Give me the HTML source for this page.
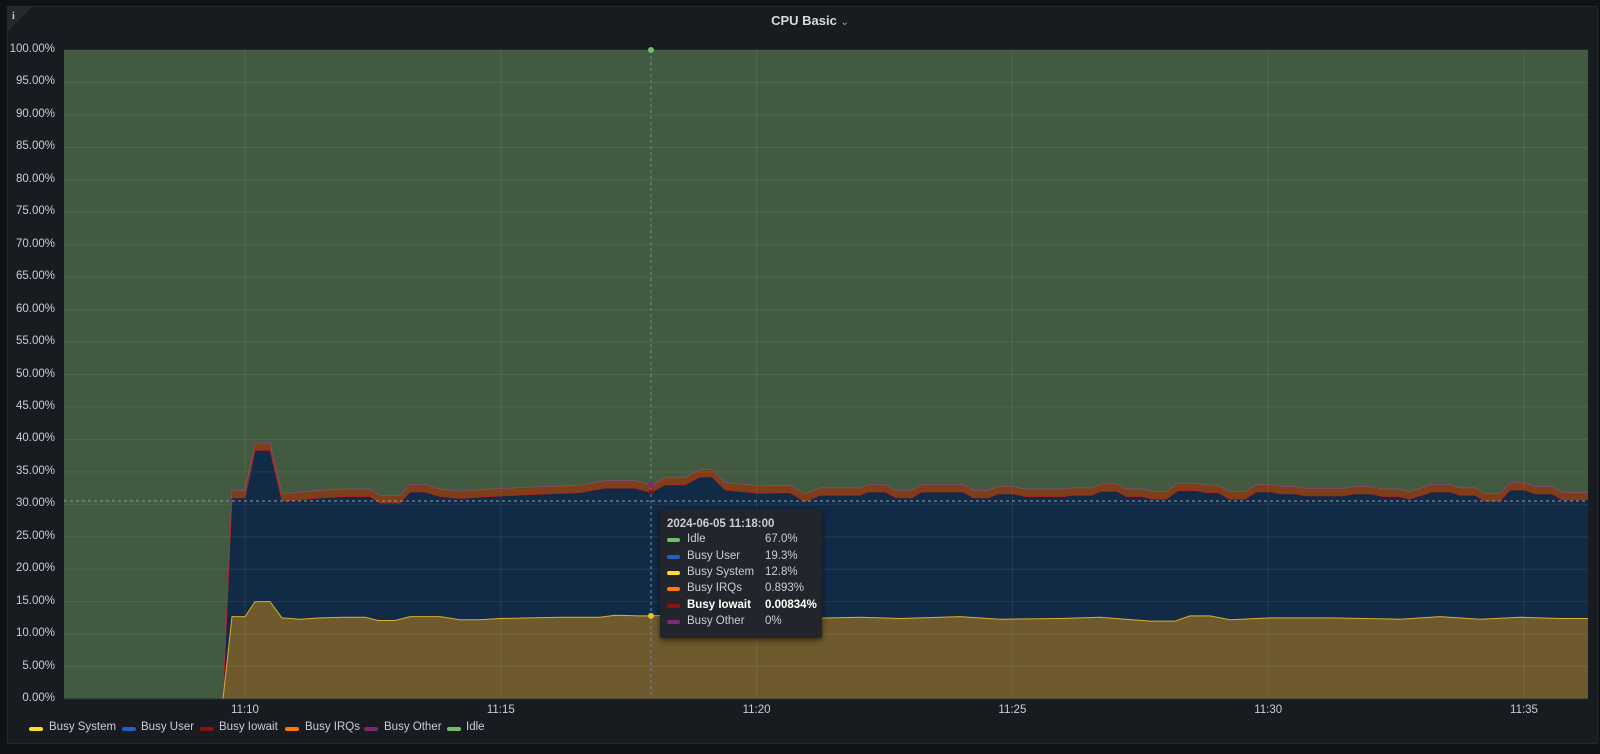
<!DOCTYPE html>
<html><head><meta charset="utf-8">
<style>
html,body{margin:0;padding:0;background:#111217;width:1600px;height:754px;overflow:hidden;font-family:"Liberation Sans",sans-serif;}
.panel{position:absolute;left:7px;top:6px;width:1591px;height:738px;background:#181b1f;border:1px solid #25282d;border-radius:2px;box-sizing:border-box;}
.title{position:absolute;left:0;width:1620px;top:13px;text-align:center;color:#d8d9e0;font-size:13px;font-weight:bold;}
.ylab{position:absolute;right:1545px;font-size:11.5px;color:#ccccdc;text-align:right;white-space:nowrap;}
.xlab{position:absolute;top:704px;font-size:11.5px;color:#ccccdc;transform:translateX(-50%);}
.leg{position:absolute;top:721px;font-size:11.5px;color:#ccccdc;}
.sw{position:absolute;top:727px;width:14px;height:4px;border-radius:2px;}
.tt{position:absolute;left:660px;top:509px;width:162px;height:129px;background:#22252b;border-radius:2px;box-shadow:0 2px 6px rgba(0,0,0,.6);font-size:11.5px;color:#ccccdc;}
.tt div{position:absolute;white-space:nowrap;}
</style></head><body>
<div class="panel"></div>
<svg style="position:absolute;left:7px;top:6px" width="26" height="26"><polygon points="0,0 26,0 0,26" fill="#25282d"/><text x="5" y="13" font-size="10" font-weight="bold" fill="#ccccdc" font-family="Liberation Serif">i</text></svg>
<div class="title">CPU Basic <span style="font-weight:normal;font-size:10px;color:#aaa">&#8964;</span></div>
<svg id="ch" style="position:absolute;left:0;top:0" width="1600" height="754"></svg>
<div id="labs"></div>
<div class="tt">
<div style="left:7px;top:9px;font-weight:bold;">2024-06-05 11:18:00</div>
<div style="left:7px;top:29px;width:13px;height:4px;background:#73bf69;border-radius:2px"></div><div style="left:27px;top:24px">Idle</div><div style="left:105px;top:24px">67.0%</div>
<div style="left:7px;top:46px;width:13px;height:4px;background:#1f60c4;border-radius:2px"></div><div style="left:27px;top:41px">Busy User</div><div style="left:105px;top:41px">19.3%</div>
<div style="left:7px;top:62px;width:13px;height:4px;background:#fade2a;border-radius:2px"></div><div style="left:27px;top:57px">Busy System</div><div style="left:105px;top:57px">12.8%</div>
<div style="left:7px;top:78px;width:13px;height:4px;background:#ff780a;border-radius:2px"></div><div style="left:27px;top:73px">Busy IRQs</div><div style="left:105px;top:73px">0.893%</div>
<div style="left:7px;top:95px;width:13px;height:4px;background:#8f1010;border-radius:2px"></div><div style="left:27px;top:90px;font-weight:bold;color:#fff">Busy Iowait</div><div style="left:105px;top:90px;font-weight:bold;color:#fff">0.00834%</div>
<div style="left:7px;top:111px;width:13px;height:4px;background:#7b2b6e;border-radius:2px"></div><div style="left:27px;top:106px">Busy Other</div><div style="left:105px;top:106px">0%</div>
</div>
<div class="sw" style="left:29px;background:#fade2a"></div><div class="leg" style="left:49px">Busy System</div>
<div class="sw" style="left:122px;background:#1f60c4"></div><div class="leg" style="left:141px">Busy User</div>
<div class="sw" style="left:200px;background:#8f1010"></div><div class="leg" style="left:219px">Busy Iowait</div>
<div class="sw" style="left:285px;background:#ff780a"></div><div class="leg" style="left:305px">Busy IRQs</div>
<div class="sw" style="left:364px;background:#7b2b6e"></div><div class="leg" style="left:384px">Busy Other</div>
<div class="sw" style="left:447px;background:#73bf69"></div><div class="leg" style="left:466px">Idle</div>
<script>
var L=64,R=1588,T=50,B=699,K=(B-T)/100;
function Y(v){return B-v*K;}
var svg=document.getElementById('ch'),h='';
var sys=[[64,0],[223,0],[232,12.7],[245,12.7],[255,15],[270,15],[282,12.5],[300,12.3],[320,12.5],[345,12.6],[365,12.6],[378,12.1],[395,12.1],[410,12.7],[440,12.7],[460,12.2],[480,12.2],[500,12.4],[530,12.5],[560,12.6],[600,12.6],[615,12.9],[640,12.8],[651,12.8],[670,12.9],[700,12.6],[760,12.5],[800,12.4],[860,12.6],[900,12.4],[960,12.7],[1000,12.3],[1060,12.4],[1100,12.6],[1150,12.0],[1175,12.0],[1190,12.8],[1210,12.8],[1230,12.2],[1270,12.5],[1330,12.5],[1400,12.3],[1440,12.7],[1480,12.3],[1520,12.6],[1560,12.4],[1588,12.4]];
var usr=[[64,0],[223,0],[232,31.0],[245,31.0],[255,38.3],[270,38.3],[282,30.5],[300,30.7],[320,31.0],[345,31.2],[370,31.2],[380,30.2],[400,30.2],[410,31.9],[425,31.9],[440,31.2],[460,30.9],[490,31.2],[530,31.5],[580,31.8],[605,32.5],[635,32.5],[651,31.8],[665,33.0],[685,33.0],[700,34.2],[712,34.2],[725,32.2],[760,31.7],[790,31.8],[805,30.4],[820,31.4]];
var z=[[0,31.4],[105,31.4],[125,31.9],[170,31.9],[200,31.0],[240,31.0],[265,31.9],[300,31.9],[330,31.9],[375,31.9],[400,31.0],[440,31.0],[465,31.6],[505,31.6],[535,31.2],[640,31.2],[660,31.4],[710,31.4],[735,32.0],[775,32.0],[800,31.2],[840,31.2],[870,30.8],[905,30.8],[935,32.1],[985,32.1],[1010,31.8],[1040,31.8],[1070,30.8],[1110,30.8],[1140,31.9],[1180,31.9],[1205,31.6],[1240,31.6],[1270,31.3],[1370,31.3],[1395,31.6],[1440,31.6],[1470,31.2],[1510,31.2],[1540,30.8]];
z.forEach(function(p){usr.push([820+p[0]/2.613,p[1]]);});
[[1432,31.9],[1450,31.9],[1460,31.4],[1475,31.4],[1485,30.5],[1500,30.5],[1510,32.2],[1525,32.2],[1535,31.6],[1552,31.6],[1562,30.7],[1588,30.7]].forEach(function(p){usr.push(p);});
var tot=usr.map(function(p){return [p[0],p[0]<=223?p[1]:p[1]+1.15];});
function line(a){return a.map(function(p,i){return (i?'L':'M')+p[0].toFixed(1)+','+Y(p[1]).toFixed(1);}).join('');}
function area(a){return line(a)+'L'+R+','+B+'L'+L+','+B+'Z';}
function band(top,bot){var s=line(top);for(var i=bot.length-1;i>=0;i--)s+='L'+bot[i][0].toFixed(1)+','+Y(bot[i][1]).toFixed(1);return s+'Z';}
h+='<rect x="'+L+'" y="'+T+'" width="'+(R-L)+'" height="'+(B-T)+'" fill="#425a40"/>';
h+='<path d="'+band(tot,usr)+'" fill="#7d3f17"/>';
h+='<path d="'+band(usr,sys)+'" fill="#112a45"/>';
h+='<path d="'+area(sys)+'" fill="#6e5a2c"/>';
for(var v=0;v<=100;v+=5){h+='<line x1="'+L+'" x2="'+R+'" y1="'+Y(v)+'" y2="'+Y(v)+'" stroke="rgba(255,255,255,0.08)"/>';}
var ticks=['11:10','11:15','11:20','11:25','11:30','11:35'];
for(var i=0;i<6;i++){var x=245+i*255.8;h+='<line x1="'+x+'" x2="'+x+'" y1="'+T+'" y2="'+B+'" stroke="rgba(255,255,255,0.08)"/>';}
h+='<path d="'+line(tot)+'" fill="none" stroke="#8a4a7a" stroke-width="0.8"/>';
h+='<path d="'+line(usr)+'" fill="none" stroke="#b0202a" stroke-width="0.8"/>';
h+='<path d="'+line(sys)+'" fill="none" stroke="#d9b030" stroke-width="1"/>';
h+='<line x1="651" x2="651" y1="'+T+'" y2="'+B+'" stroke="#6e8aa8" stroke-dasharray="3,3"/>';
h+='<line x1="'+L+'" x2="'+R+'" y1="501" y2="501" stroke="#8a9db8" stroke-dasharray="3,3"/>';
h+='<circle cx="651" cy="'+Y(100)+'" r="3" fill="#73bf69"/>';
h+='<circle cx="651" cy="'+Y(33.0)+'" r="3" fill="#7b2b6e"/>';
h+='<circle cx="651" cy="'+Y(31.9)+'" r="2.5" fill="#8f1010"/>';
h+='<circle cx="651" cy="'+Y(12.8)+'" r="3" fill="#e8c030"/>';
h+='<line x1="'+L+'" x2="'+R+'" y1="'+B+'" y2="'+B+'" stroke="#2c2f35"/>';
svg.innerHTML=h;
var lb='';
for(var v=0;v<=100;v+=5){lb+='<div class="ylab" style="top:'+(Y(v)-7)+'px">'+v.toFixed(2)+'%</div>';}
for(var i=0;i<6;i++){lb+='<div class="xlab" style="left:'+(245+i*255.8)+'px">'+ticks[i]+'</div>';}
document.getElementById('labs').innerHTML=lb;
</script>
</body></html>
